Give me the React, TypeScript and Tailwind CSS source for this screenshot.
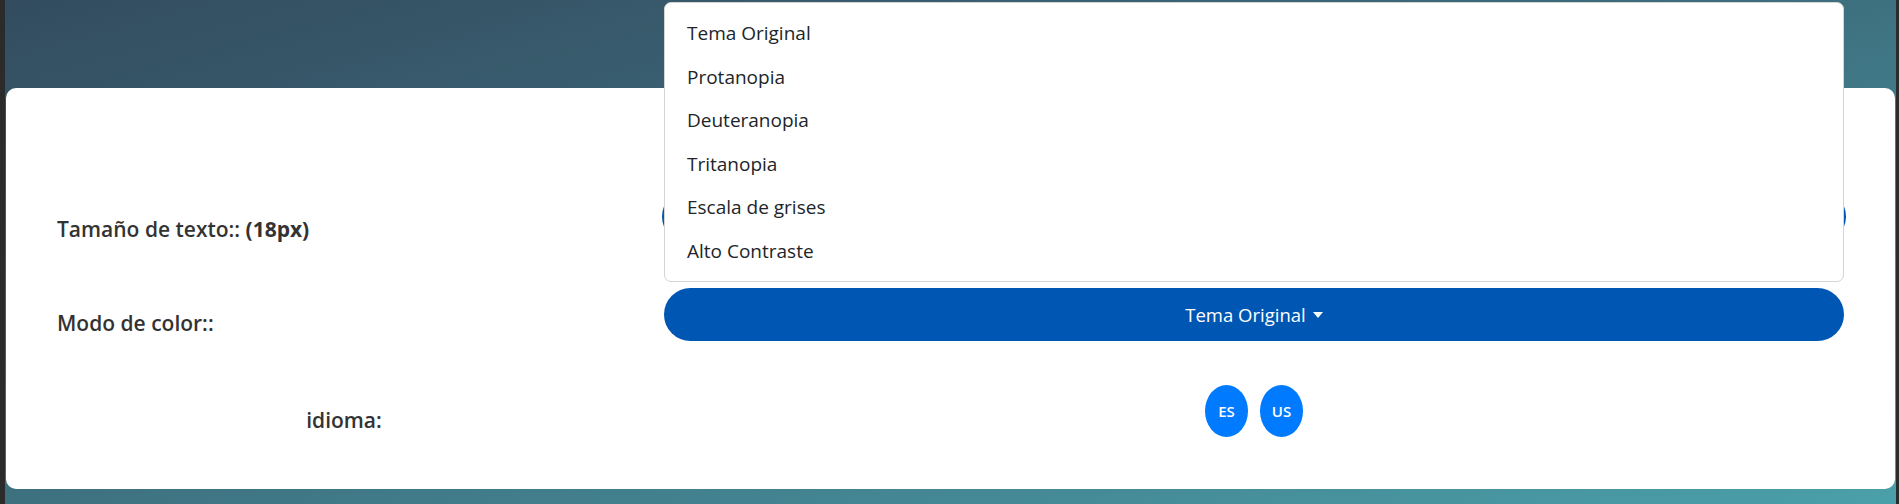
import React, { useState } from "react";

const themes = [
  "Tema Original",
  "Protanopia",
  "Deuteranopia",
  "Tritanopia",
  "Escala de grises",
  "Alto Contraste",
];

export default function App() {
  const [theme, setTheme] = useState("Tema Original");
  const [lang, setLang] = useState("ES");

  return (
    <div className="h-[504px] w-full overflow-hidden bg-[#2b2b2b] pl-[5px] pr-[3px] font-['Open_Sans',sans-serif]">
      <div className="h-full bg-gradient-to-br from-[#334c5f] via-[#3e7180] to-[#4aa0aa] px-px pt-[88px] pb-[15px]">
        <div className="h-full rounded-[10px] bg-white pl-[51px] pr-[50px] pt-[102px]">
          {/* Tamaño de texto */}
          <div className="grid h-[53px] grid-cols-[574px_1180px] gap-x-[33px] items-start">
            <div className="pt-[25px] text-[21px] leading-[28px] font-semibold text-[#333]">
              Tamaño de texto:: <span className="font-bold">(18px)</span>
            </div>
            <div className="-mx-[2px] mt-[-1px] h-[55px] rounded-full bg-[#0056b3]" />
          </div>

          {/* Modo de color */}
          <div className="mt-[45px] grid h-[53px] grid-cols-[574px_1180px] gap-x-[33px] items-start">
            <div className="pt-[21px] text-[21px] leading-[28px] font-semibold text-[#333]">Modo de color::</div>
            <div className="relative">
              <div className="absolute bottom-[calc(100%+6px)] left-0 right-0 rounded-[7px] border border-[#d4d4d4] bg-white py-2">
                {themes.map((t) => (
                  <button
                    key={t}
                    onClick={() => setTheme(t)}
                    className="flex h-[43.6px] w-full items-center px-[22px] text-left text-[19px] text-[#212529]"
                  >
                    {t}
                  </button>
                ))}
              </div>
              <button className="flex h-[53px] w-full items-center justify-center rounded-full bg-[#0056b3] text-[18.5px] text-white">
                {theme}
                <span className="ml-[7px] inline-block h-0 w-0 border-x-[5px] border-t-[6px] border-x-transparent border-t-white" />
              </button>
            </div>
          </div>

          {/* idioma */}
          <div className="mt-[44px] grid h-[52px] grid-cols-[574px_1180px] gap-x-[33px] items-start">
            <div className="pt-[21px] text-center text-[21px] leading-[28px] font-semibold text-[#333]">idioma:</div>
            <div className="flex justify-center gap-[12px]">
              {["ES", "US"].map((l) => (
                <button
                  key={l}
                  onClick={() => setLang(l)}
                  className="flex h-[52px] w-[43px] items-center justify-center rounded-[50%] bg-[#007bff] text-[15px] font-semibold text-white"
                >
                  {l}
                </button>
              ))}
            </div>
          </div>
        </div>
      </div>
    </div>
  );
}
